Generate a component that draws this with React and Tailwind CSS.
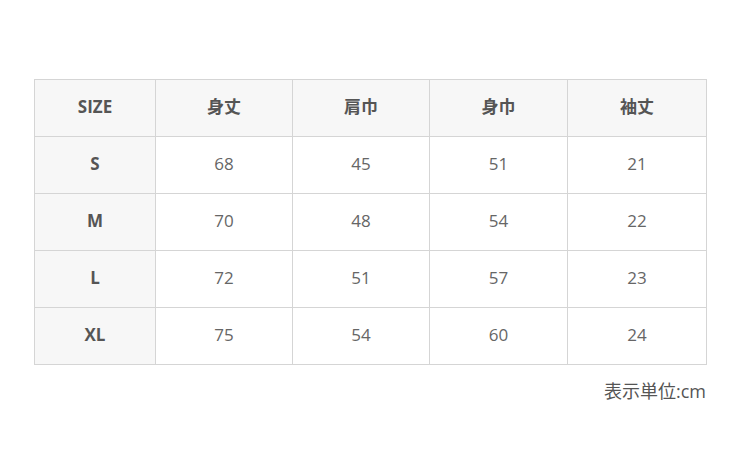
import React from 'react';

const headers = ['SIZE', '身丈', '肩巾', '身巾', '袖丈'];
const rows = [
  ['S', 68, 45, 51, 21],
  ['M', 70, 48, 54, 22],
  ['L', 72, 51, 57, 23],
  ['XL', 75, 54, 60, 24],
];

const cell = 'border border-[#d5d5d5] h-[57px] pb-[3px] text-center align-middle';

const App = () => {
  return (
    <div
      className="w-[750px] h-[450px] bg-white pt-[79px] pl-[34px] text-[#555]"
      style={{ fontFamily: '"Open Sans", "Noto Sans CJK JP", sans-serif' }}
    >
      <table className="w-[672px] border-collapse table-fixed text-[17px]">
        <colgroup>
          <col className="w-[121px]" />
          <col className="w-[137px]" />
          <col className="w-[137px]" />
          <col className="w-[138px]" />
          <col className="w-[139px]" />
        </colgroup>
        <thead>
          <tr className="bg-[#f7f7f7]">
            {headers.map((h) => (
              <th key={h} className={`${cell} font-bold text-[#555]`}>
                {h}
              </th>
            ))}
          </tr>
        </thead>
        <tbody>
          {rows.map((r) => (
            <tr key={r[0]}>
              <th className={`${cell} bg-[#f7f7f7] font-bold text-[#555]`}>{r[0]}</th>
              {r.slice(1).map((v, i) => (
                <td key={i} className={`${cell} bg-white text-[#666]`}>
                  {v}
                </td>
              ))}
            </tr>
          ))}
        </tbody>
      </table>
      <div className="w-[672px] text-right mt-[13px] text-[18px] text-[#555]">表示単位:cm</div>
    </div>
  );
};

export default App;
